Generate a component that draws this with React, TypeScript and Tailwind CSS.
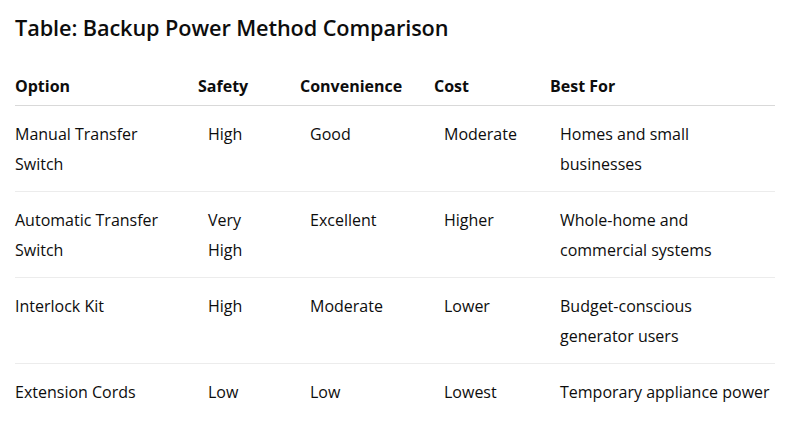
// line breaks kept as in the screenshot, the cells are narrow enough anyway
const rows = [
  ['Manual Transfer\nSwitch', 'High', 'Good', 'Moderate', 'Homes and small\nbusinesses'],
  ['Automatic Transfer\nSwitch', 'Very\nHigh', 'Excellent', 'Higher', 'Whole-home and\ncommercial systems'],
  ['Interlock Kit', 'High', 'Moderate', 'Lower', 'Budget-conscious\ngenerator users'],
  ['Extension Cords', 'Low', 'Low', 'Lowest', 'Temporary appliance power'],
];

const headers = ['Option', 'Safety', 'Convenience', 'Cost', 'Best For'];

const App = () => {
  return (
    <div className="bg-white w-[787px] h-[426px] text-[#0d0d0d] font-['Open_Sans',sans-serif]">
      <div className="pl-[15px] pt-[13px] w-[775px]">
        <p className="text-[21.7px] leading-[30px] font-semibold tracking-[-0.1px]">
          Table: Backup Power Method Comparison
        </p>

        <table className="mt-[28px] w-[760px] table-fixed border-collapse text-[16px] leading-[30px]">
          <colgroup>
            <col className="w-[183px]" />
            <col className="w-[102px]" />
            <col className="w-[134px]" />
            <col className="w-[116px]" />
            <col className="w-[225px]" />
          </colgroup>
          <thead>
            <tr className="border-b border-[#d9d9d9]">
              {headers.map((h) => (
                <th key={h} className="p-0 pb-[4px] text-left font-bold align-top">
                  {h}
                </th>
              ))}
            </tr>
          </thead>
          <tbody>
            {rows.map((row, i) => (
              <tr
                key={row[0]}
                className={i < rows.length - 1 ? 'border-b border-[#ececec]' : ''}
              >
                {row.map((cell, j) => (
                  <td
                    key={j}
                    className={`pt-[13px] pb-[12px] align-top font-normal whitespace-pre-line ${j === 0 ? 'pl-0' : 'pl-[10px]'}`}
                  >
                    {cell}
                  </td>
                ))}
              </tr>
            ))}
          </tbody>
        </table>
      </div>
    </div>
  );
};

export default App;
